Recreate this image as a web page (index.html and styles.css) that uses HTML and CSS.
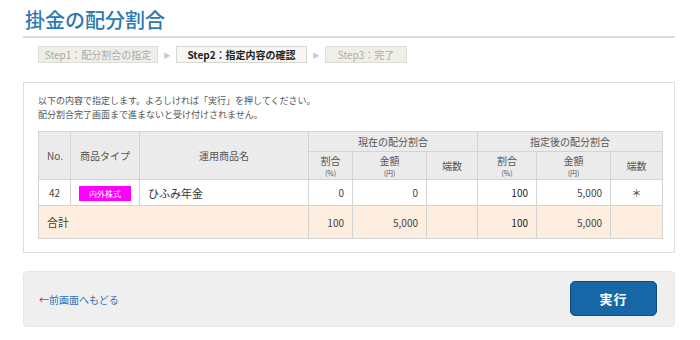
FILE: index.html
```html
<!DOCTYPE html>
<html lang="ja">
<head>
  <meta charset="UTF-8">
  <title>掛金の配分割合</title>
  <link rel="stylesheet" href="styles.css">
</head>
<body>
  <div class="container">
    <h1>掛金の配分割合</h1>

    <!-- ステップ表示 -->
    <div class="steps">
      <div class="step">Step1：配分割合の指定</div>
      <span class="step-arrow">&#9654;</span>
      <div class="step current">Step2：指定内容の確認</div>
      <span class="step-arrow">&#9654;</span>
      <div class="step">Step3：完了</div>
    </div>

    <!-- 確認内容 -->
    <div class="panel">
      <p class="lead">以下の内容で指定します。よろしければ「実行」を押してください。<br>配分割合完了画面まで進まないと受け付けされません。</p>
      <table class="alloc">
        <colgroup>
          <col style="width:32px"><col style="width:69px"><col style="width:169px">
          <col style="width:44px"><col style="width:74px"><col style="width:51px">
          <col style="width:59px"><col style="width:74px"><col style="width:52px">
        </colgroup>
        <thead>
          <tr class="head1">
            <th rowspan="2">No.</th>
            <th rowspan="2">商品タイプ</th>
            <th rowspan="2">運用商品名</th>
            <th colspan="3">現在の配分割合</th>
            <th colspan="3">指定後の配分割合</th>
          </tr>
          <tr class="head2">
            <th><span class="unit-label">割合</span><small>(%)</small></th>
            <th><span class="unit-label">金額</span><small>(円)</small></th>
            <th>端数</th>
            <th><span class="unit-label">割合</span><small>(%)</small></th>
            <th><span class="unit-label">金額</span><small>(円)</small></th>
            <th>端数</th>
          </tr>
        </thead>
        <tbody>
          <tr class="row">
            <td class="c">42</td>
            <td class="c"><span class="badge">内外株式</span></td>
            <td class="name">ひふみ年金</td>
            <td class="num">0</td>
            <td class="num">0</td>
            <td></td>
            <td class="num strong">100</td>
            <td class="num">5,000</td>
            <td class="c">＊</td>
          </tr>
          <tr class="total">
            <td colspan="3" class="label">合計</td>
            <td class="num">100</td>
            <td class="num">5,000</td>
            <td></td>
            <td class="num strong">100</td>
            <td class="num">5,000</td>
            <td></td>
          </tr>
        </tbody>
      </table>
    </div>

    <!-- 操作エリア -->
    <div class="actions">
      <a href="#" class="back"><span class="arr">&larr;</span>前画面へもどる</a>
      <button class="run">実行</button>
    </div>
  </div>
</body>
</html>
```

FILE: styles.css
```css
/* 全体 */
* { box-sizing: border-box; }
body {
  margin: 0;
  font-family: "Noto Sans CJK JP", "Noto Sans", sans-serif;
  color: #444;
  background: #fff;
}
.container {
  width: 675px;
  padding-left: 23px;
}
h1 {
  margin: 7px 0 0;
  padding: 0 0 3px 2px;
  font-size: 20px;
  font-weight: 500;
  line-height: 26px;
  color: #2b78b5;
  border-bottom: 2px solid #dcdcdc;
}
/* ステップ */
.steps {
  display: flex;
  align-items: center;
  margin: 8px 0 0 15px;
}
.step {
  width: 120px;
  height: 17px;
  line-height: 15px;
  font-size: 10px;
  text-align: center;
  color: #aaa;
  background: #efefe8;
  border: 1px solid #deded6;
}
.step.current {
  width: 131px;
  color: #222;
  font-weight: bold;
  background: #f6f6f2;
  border-color: #d8d8d0;
}
.step:last-child { width: 82px; }
.step-arrow {
  width: 18px;
  text-align: center;
  font-size: 7px;
  color: #c8c8c8;
}
/* 確認パネル */
.panel {
  margin-top: 19px;
  padding: 11px 14px 13px;
  border: 1px solid #dedede;
}
.lead {
  margin: 0;
  font-size: 9px;
  line-height: 14px;
  color: #555;
}
.alloc {
  margin-top: 9px;
  width: 624px;
  table-layout: fixed;
  border-collapse: collapse;
  font-size: 10px;
}
.alloc th, .alloc td {
  border: 1px solid #d4d4d4;
  padding: 0 8px;
}
.alloc th {
  background: #ebebeb;
  font-weight: normal;
  color: #555;
  text-align: center;
}
.head1 th { height: 20px; }
.head2 th {
  height: 28px;
  line-height: 14px;
}
.unit-label {
  display: block;
  line-height: 14px;
}
.head2 small {
  display: block;
  font-size: 7px;
  line-height: 10px;
}
.row td { height: 26px; background: #fff; }
.total td { height: 33px; background: #fdeee0; }
.c { text-align: center; }
.num { text-align: right; }
.name { font-size: 11px; color: #333; padding-left: 8px; }
.label { font-size: 11px; color: #444; }
.strong { color: #222; }
.badge {
  display: inline-block;
  width: 52px;
  height: 15px;
  line-height: 15px;
  font-size: 8px;
  color: #fff;
  background: #ff00ff;
}
/* 操作エリア */
.actions {
  display: flex;
  align-items: center;
  justify-content: space-between;
  margin-top: 18px;
  height: 56px;
  padding: 0 17px 0 15px;
  background: #efefef;
  border: 1px solid #e6e6e6;
  border-radius: 4px;
}
.back {
  font-size: 10px;
  color: #3a6fb0;
  text-decoration: none;
}
.back .arr { color: #d0312d; }
.run {
  width: 87px;
  height: 35px;
  margin-top: -1px;
  font-family: inherit;
  font-size: 13px;
  font-weight: bold;
  color: #fff;
  background: #1767a7;
  border: 1px solid #0d4b7e;
  border-radius: 5px;
  letter-spacing: 1px;
}
```
